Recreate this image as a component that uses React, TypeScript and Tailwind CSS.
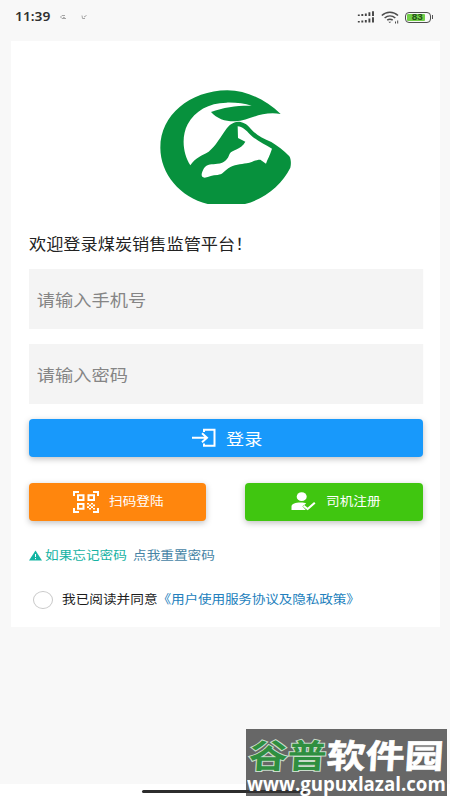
import { useState } from "react";
import type { ReactNode } from "react";

interface WideProps {
  children: ReactNode;
  className?: string;
}

// text is a bit wider than its font size
function Wide({ children, className = "" }: WideProps) {
  return (
    <span className={`inline-block origin-left scale-x-[1.12] whitespace-nowrap ${className}`}>
      {children}
    </span>
  );
}

function StatusBar() {
  return (
    <div className="h-[41px] flex items-start justify-between pl-[15px] pr-[17px] pt-2">
      <div className="flex items-center h-[18px]">
        <Wide className="w-[44px] text-[12.3px] font-semibold font-['Noto_Sans'] text-[#303030]">11:39</Wide>
        <svg className="w-[30px] h-[8px]" viewBox="0 0 30 8" fill="none" stroke="#a5a5a5" strokeWidth="1">
          <path d="M6 2.5H3L1.5 4L3 5.5H7M4 4.2L6 5" />
          <path d="M23 2.5L23.5 5.5H26M25 4L27.5 2.5" />
        </svg>
      </div>

      <div className="flex items-center h-[18px]">
        <svg className="w-[18px] h-[12px]" viewBox="0 0 18 12" stroke="#444" strokeWidth="1.9">
          <path d="M1.8 5V3.5M5.3 5V3M8.8 5V2.5M12.4 5V1.2M16 5V.3M1.8 11.5V10M5.3 11.5V9.5M8.8 11.5V8.9M12.4 11.5V7.6M16 11.5V6.3" />
        </svg>
        <svg className="w-[18px] h-[13px] ml-[6px]" viewBox="0 0 18 13" fill="none" stroke="#4c4c4c" strokeWidth="1.5">
          <path d="M.8 4.5C5.3.1 12.5.1 17 4.5M3.6 7c3.2-2.8 7.6-2.8 10.7 0M6.2 9.2c1.7-1.3 3.8-1.3 5.5 0" />
          <path d="M7.3 10.7h3L8.8 12Z" fill="#4c4c4c" stroke="none" />
          <path d="M14.5 12.5v-2M16.7 12.5v-3" strokeWidth="1" />
        </svg>
        <div className="ml-[6px] w-[26px] h-[11px] rounded-[4px] border-[1.5px] border-[#4d4d4d] p-px flex">
          <div className="w-[18px] h-full bg-[#72cf48] rounded-[1px] flex items-center justify-center">
            <span className="pl-[3px] text-[9px] leading-none font-bold font-['Liberation_Sans'] text-[#24501a] scale-x-[1.1]">83</span>
          </div>
        </div>
        <div className="w-[1.5px] h-[4px] ml-px bg-[#555]" />
      </div>
    </div>
  );
}

function Logo() {
  return (
    <svg className="w-[132px] h-[115px]" viewBox="31 29 396 345">
      <path
        fill="#07913d"
        fillRule="evenodd"
        d="M393 101C350 59 294 31 233 30C120 31 32 105 32 202C32 280 91 350 174 371H286C348 355 397 312 422 262C425 249 424 236 419 228C402 209 383 196 365 185C338 174 320 164 303 145C291 130 279 124 265 124C249 126 240 133 232 143C213 168 199 197 177 214C156 227 137 231 122 255C100 220 94 170 114 132C136 91 177 68 230 67C257 66 284 70 306 76C266 75 223 80 184 95C202 116 229 124 257 123C296 122 333 91 393 101ZM264 138C278 139 288 149 302 163C321 181 345 192 367 205C361 224 353 238 349 250L332 238C315 238 308 247 291 249C273 252 253 252 236 264C219 277 219 282 204 284C188 284 178 290 165 292C150 289 157 276 162 265C172 248 188 253 203 250C225 249 235 235 240 220C248 207 274 209 287 184L265 173Z"
      />
    </svg>
  );
}

function LoginIcon() {
  return (
    <svg className="w-[25px] h-[20px]" viewBox="0 0 25 20" fill="none" stroke="#fff" strokeWidth="2">
      <path d="M1 9.7H16M11 5.2L16 9.7L11 14.2M13 4V1.8H23.5V17.8H13V15.6" />
    </svg>
  );
}

function QrIcon() {
  return (
    <svg className="w-[26px] h-[22px]" viewBox="0 0 26 22" fill="none" stroke="#fff" strokeWidth="2">
      <path d="M1 5V1H6M20 1H25V5M1 17V21H6M20 21H25V17" />
      <path d="M5 4.3H10.5V9H5ZM15.5 4.3H21V9H15.5ZM5 13H10.5V17.7H5Z" />
      <path fill="#fff" stroke="none" d="M14 12h2v1.6h2V12h2v1.6h-2v1.7h-2v-1.7h-2ZM20 13.6h2v1.7h-2ZM14 15.3h2v1.6h-2ZM18 15.3h2v1.6h-2ZM16 16.9h2v1.7h-2ZM20 16.9h2v1.7h-2Z" />
    </svg>
  );
}

function UserCheckIcon() {
  return (
    <svg className="w-[25px] h-[19px]" viewBox="0 0 25 19">
      <ellipse cx="10.7" cy="4.7" rx="5" ry="4.4" fill="#fff" />
      <path d="M.5 18V14.6C.5 11.8 5.5 10.4 10 10.6C12 10.6 14 11 15.2 11.6L11.4 14.2L14.8 18Z" fill="#fff" />
      <path d="M12.6 13.8L16.6 17L23.8 10.8" fill="none" stroke="#fff" strokeWidth="2.1" />
    </svg>
  );
}

function Watermark() {
  return (
    <div className="absolute left-[246px] top-[729px] w-[201px] h-[67px] bg-[#676767] overflow-hidden">
      <div className="absolute left-0 top-[61px] w-[60px] h-[3px] bg-[#303030] rounded-r" />
      <div className="relative h-[45px] pl-[3px] pt-[5px]">
        <span className="inline-block origin-left scale-x-[1.18] -skew-x-3 text-[33px] leading-[40px] font-bold whitespace-nowrap text-white">
          <span className="text-[#2f8f40] [-webkit-text-stroke:2px_#c9dccb] [paint-order:stroke_fill]">谷普</span>
          <span className="[-webkit-text-stroke:0.6px_#fff]">软件园</span>
        </span>
      </div>
      <div className="relative w-[199px] pl-px text-[19px] leading-[20px] font-bold font-['Open_Sans'] text-white whitespace-nowrap">
        <span className="inline-block origin-left scale-x-[0.982] w-[190px]">www.gupuxlazal.com</span>
      </div>
    </div>
  );
}

function App() {
  const [phone, setPhone] = useState("");
  const [password, setPassword] = useState("");
  const [agreed, setAgreed] = useState(false);

  const inputClass =
    "block h-[60px] w-[352px] origin-left scale-x-[1.12] bg-[#f4f4f4] pl-[7px] text-[16.3px] text-[#333] placeholder-[#858585] focus:outline-none";

  return (
    <div className="relative w-[450px] h-[800px] bg-[#f8f8f8] overflow-hidden font-['Noto_Sans_CJK_SC',sans-serif]">
      <StatusBar />

      <div className="ml-[11px] w-[429px] h-[586px] bg-white pl-[18px] pr-[17px] flex flex-col">
        <div className="flex justify-center pt-[48.5px]">
          <Logo />
        </div>
        <p className="mt-[26px] h-[24px] leading-[24px] text-[15.35px] text-[#222]">
          <Wide>欢迎登录煤炭销售监管平台！</Wide>
        </p>

        {/* inputs */}
        <input
          className={`${inputClass} mt-[14px] shrink-0`}
          placeholder="请输入手机号"
          value={phone}
          onChange={(e) => setPhone(e.target.value)}
        />
        <input
          className={`${inputClass} mt-[15px] shrink-0`}
          type="password"
          placeholder="请输入密码"
          value={password}
          onChange={(e) => setPassword(e.target.value)}
        />

        <button className="mt-[15.5px] h-[38px] shrink-0 bg-[#1899fb] rounded-[4px] shadow-[0_2px_6px_rgba(0,0,0,0.25)] flex items-center pl-[162px] text-white">
          <LoginIcon />
          <Wide className="ml-[9.5px] text-[16.2px]">登录</Wide>
        </button>

        <div className="mt-[25.5px] flex justify-between">
          <button className="w-[177px] h-[38px] bg-[#ff860d] rounded-[4px] shadow-[0_2px_6px_rgba(0,0,0,0.25)] flex items-center pl-[44px] text-white">
            <QrIcon />
            <Wide className="ml-[10px] text-[12.2px]">扫码登陆</Wide>
          </button>
          <button className="w-[178px] h-[38px] bg-[#40c610] rounded-[4px] shadow-[0_2px_6px_rgba(0,0,0,0.25)] flex items-center pl-[46px] text-white">
            <UserCheckIcon />
            <Wide className="ml-[10px] text-[12.2px]">司机注册</Wide>
          </button>
        </div>

        <div className="mt-[24.5px] h-[20px] flex items-center text-[12.2px]">
          <svg className="w-[13px] h-[11px]" viewBox="0 0 13 11">
            <path d="M6.5 .5L13 10.5H0Z" fill="#13b5a3" />
            <path d="M6.5 4V7M6.5 8V9.2" stroke="#fff" strokeWidth="1" />
          </svg>
          <Wide className="ml-[3px] w-[88px] text-[#17b3a4]">如果忘记密码</Wide>
          <Wide className="text-[#4684a5]">点我重置密码</Wide>
        </div>

        <div className="mt-[25px] h-[20px] flex items-center text-[12.2px]">
          <button
            className={`ml-[4px] w-[20px] h-[18px] rounded-[50%] border border-[#c9c9c9] ${agreed ? "bg-[#1899fb]" : "bg-white"}`}
            onClick={() => setAgreed(!agreed)}
          />
          <Wide className="ml-[9px] -mt-px text-[#1c1c1c]">
            我已阅读并同意<span className="text-[#237fbd] tracking-[-0.16px]">《用户使用服务协议及隐私政策》</span>
          </Wide>
        </div>
      </div>

      {/* bottom gesture bar */}
      <div className="mt-[157px] h-[16px] bg-white pt-[6px] pl-[142px]">
        <div className="w-[165px] h-[3px] rounded-full bg-[#2d2d2d]" />
      </div>

      <Watermark />
    </div>
  );
}

export default App;
